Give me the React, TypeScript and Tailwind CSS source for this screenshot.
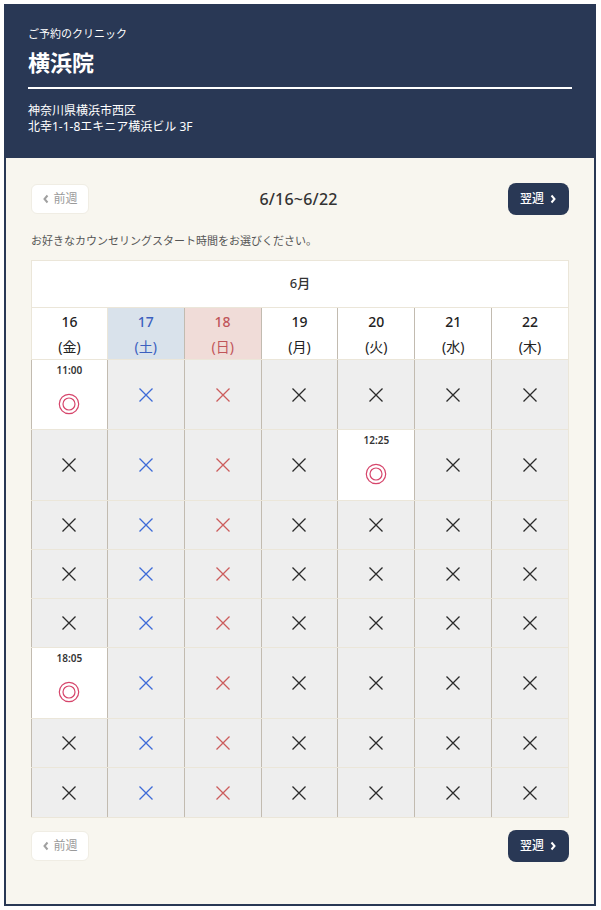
import React from "react";

const FONT = { fontFamily: '"Noto Sans", "Noto Sans CJK JP", sans-serif' };

type Kind = "x" | string;

const days = [
  { d: "16", w: "金", t: "n" },
  { d: "17", w: "土", t: "sat" },
  { d: "18", w: "日", t: "sun" },
  { d: "19", w: "月", t: "n" },
  { d: "20", w: "火", t: "n" },
  { d: "21", w: "水", t: "n" },
  { d: "22", w: "木", t: "n" },
];

const rows: { h: string; cells: Kind[] }[] = [
  { h: "h-[70px]", cells: ["11:00", "x", "x", "x", "x", "x", "x"] },
  { h: "h-[71px]", cells: ["x", "x", "x", "x", "12:25", "x", "x"] },
  { h: "h-[49px]", cells: ["x", "x", "x", "x", "x", "x", "x"] },
  { h: "h-[49px]", cells: ["x", "x", "x", "x", "x", "x", "x"] },
  { h: "h-[49px]", cells: ["x", "x", "x", "x", "x", "x", "x"] },
  { h: "h-[71px]", cells: ["18:05", "x", "x", "x", "x", "x", "x"] },
  { h: "h-[49px]", cells: ["x", "x", "x", "x", "x", "x", "x"] },
  { h: "h-[50px]", cells: ["x", "x", "x", "x", "x", "x", "x"] },
];

function Cross({ color }: { color: string }) {
  return (
    <svg width="16" height="16" viewBox="0 0 16 16">
      <path d="M1.5 1.5 L14.5 14.5 M14.5 1.5 L1.5 14.5" stroke={color} strokeWidth="1.3" fill="none" />
    </svg>
  );
}

function DoubleCircle() {
  return (
    <svg width="22" height="22" viewBox="0 0 22 22">
      <circle cx="11" cy="11" r="9.7" stroke="#d6456b" strokeWidth="1.2" fill="none" />
      <circle cx="11" cy="11" r="6" stroke="#d6456b" strokeWidth="1.2" fill="none" />
    </svg>
  );
}

function ChevronLeft({ color }: { color: string }) {
  return (
    <svg width="8" height="10" viewBox="0 0 8 10">
      <path d="M5.5 1.5 L2.5 5 L5.5 8.5" stroke={color} strokeWidth="2" fill="none" />
    </svg>
  );
}

function ChevronRight({ color }: { color: string }) {
  return (
    <svg width="8" height="10" viewBox="0 0 8 10">
      <path d="M2.5 1.5 L5.5 5 L2.5 8.5" stroke={color} strokeWidth="2" fill="none" />
    </svg>
  );
}

function Nav({ title }: { title: boolean }) {
  return (
    <div className="flex items-center justify-between">
      <button className="flex items-center justify-center gap-[3px] w-[58px] h-[30px] bg-white rounded-[6px] text-[12px] text-[#9a9a9a] border border-[#f0ede4]">
        <ChevronLeft color="#a0a0a0" />
        <span>前週</span>
      </button>
      {title ? (
        <div className="text-[16px] font-medium text-[#333] tracking-[0.2px]">6/16~6/22</div>
      ) : null}
      <button className="flex items-center justify-center gap-[5px] w-[61px] h-[32px] bg-[#293855] rounded-[8px] text-[12px] text-white font-medium">
        <span>翌週</span>
        <ChevronRight color="#ffffff" />
      </button>
    </div>
  );
}

export default function App() {
  return (
    <div className="bg-white w-[601px] h-[910px] pt-[4px] pl-[4px]" style={FONT}>
      <div className="w-[592px] h-[902px] border-2 border-[#293855] flex flex-col">
        <div className="bg-[#293855] h-[152px] px-[22px] pt-[20px] text-white">
          <div className="text-[11px] leading-[16px]">ご予約のクリニック</div>
          <div className="text-[22px] font-bold leading-[30px] mt-[5px]">横浜院</div>
          <div className="h-[1.5px] bg-white mt-[10px]" />
          <div className="text-[12px] leading-[16px] mt-[14px]">
            <div>神奈川県横浜市西区</div>
            <div>北幸1-1-8エキニア横浜ビル 3F</div>
          </div>
        </div>
        <div className="flex-1 bg-[#f8f6ef] px-[25px] pt-[25px]">
          <Nav title={true} />
          <div className="text-[11px] text-[#555] mt-[18px] leading-[16px]">
            お好きなカウンセリングスタート時間をお選びください。
          </div>
          <div className="mt-[11px]">
            <div className="h-[48px] bg-white border border-[#ebe6d9] flex items-center justify-center text-[13px] font-medium text-[#333]">
              6月
            </div>
            <div className="grid grid-cols-7 h-[52px] bg-white border-b border-[#ebe6d9]">
              {days.map((d, i) => {
                const bg = d.t === "sat" ? "bg-[#d9e2eb]" : d.t === "sun" ? "bg-[#f0dcd8]" : "bg-white";
                const col = d.t === "sat" ? "text-[#3b5fbf]" : d.t === "sun" ? "text-[#c0555a]" : "text-[#222]";
                const br = i < 6 ? "border-r border-[#c2bbb0]" : "border-r border-[#ebe6d9]";
                const bl = i === 0 ? "border-l border-[#ebe6d9]" : "";
                return (
                  <div key={i} className={`${bg} ${col} ${br} ${bl} flex flex-col items-center pt-[4px]`}>
                    <div className="text-[14px] font-medium leading-[20px]">{d.d}</div>
                    <div className="text-[14px] leading-[20px] mt-[5px]">({d.w})</div>
                  </div>
                );
              })}
            </div>
            {rows.map((r, ri) => (
              <div key={ri} className={`grid grid-cols-7 ${r.h} border-b border-[#ebe6d9]`}>
                {r.cells.map((c, ci) => {
                  const br = ci < 6 ? "border-r border-[#c2bbb0]" : "border-r border-[#ebe6d9]";
                  const bl = ci === 0 ? "border-l border-[#c2bbb0]" : "";
                  const color = days[ci].t === "sat" ? "#3d6ad8" : days[ci].t === "sun" ? "#cc5c5c" : "#2a2a2a";
                  if (c === "x") {
                    return (
                      <div key={ci} className={`bg-[#eeeeee] ${br} ${bl} flex items-center justify-center`}>
                        <Cross color={color} />
                      </div>
                    );
                  }
                  return (
                    <div key={ci} className={`bg-white ${br} ${bl} flex flex-col items-center pt-[3px]`}>
                      <div className="text-[10px] font-semibold leading-[14px] text-[#333]">{c}</div>
                      <div className="mt-[16px]">
                        <DoubleCircle />
                      </div>
                    </div>
                  );
                })}
              </div>
            ))}
          </div>
          <div className="mt-[12px]">
            <Nav title={false} />
          </div>
        </div>
      </div>
    </div>
  );
}
